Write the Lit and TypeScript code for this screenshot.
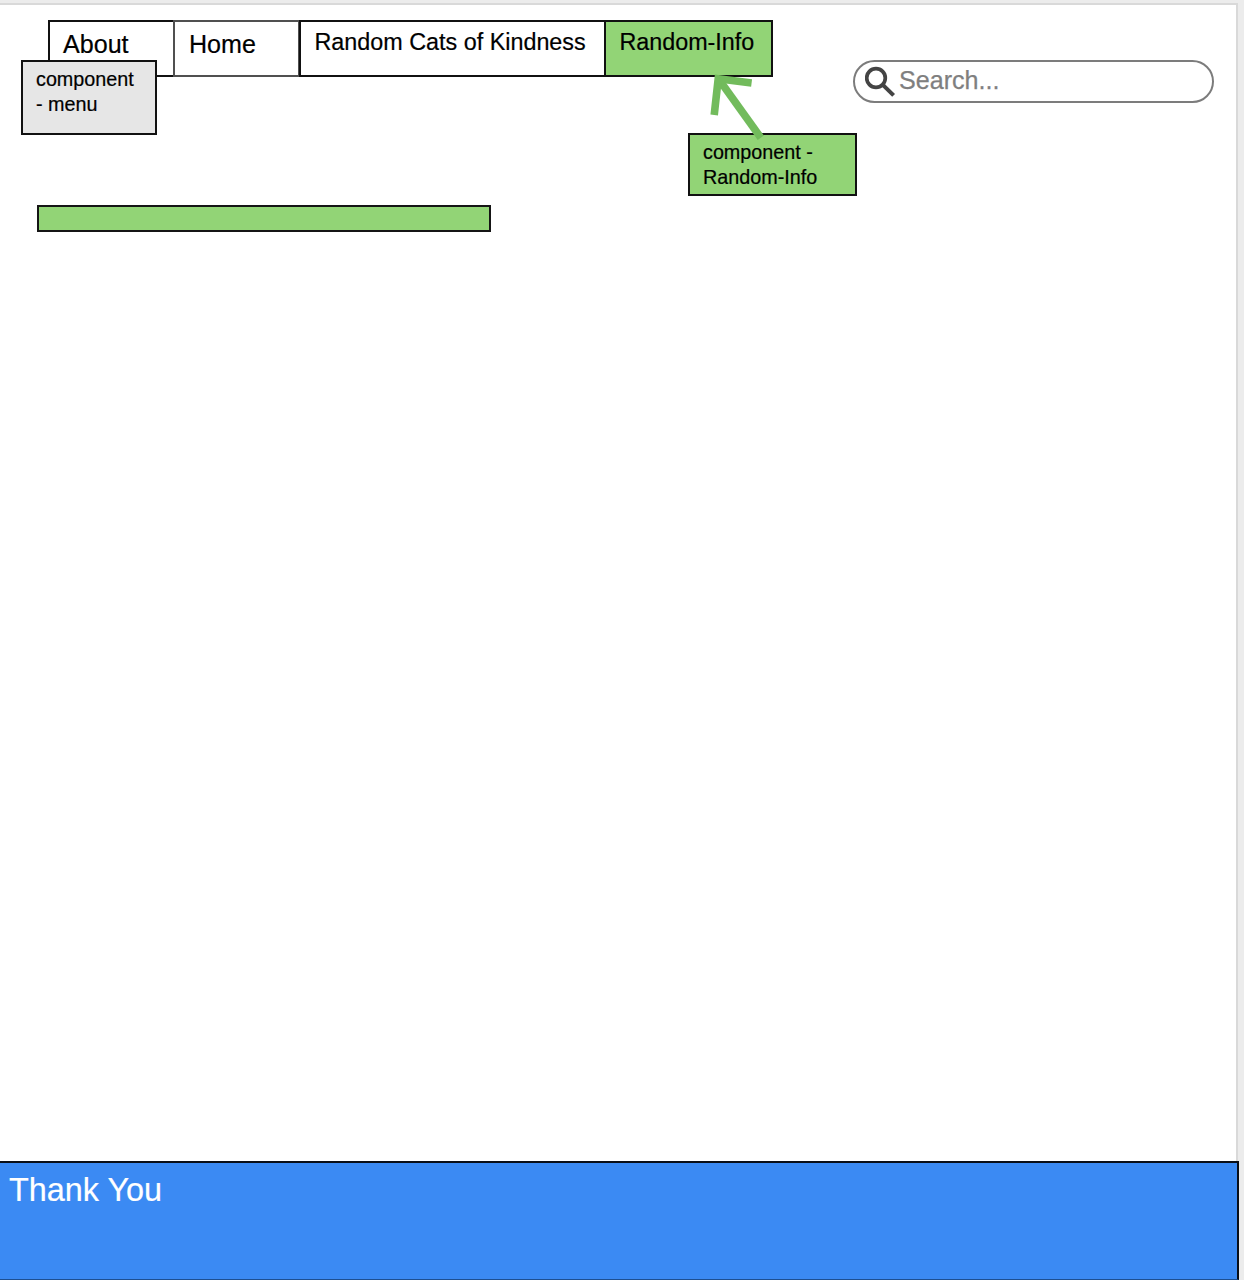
import { LitElement, html, css } from "lit";
import { customElement } from "lit/decorators.js";

@customElement("search-box")
class SearchBox extends LitElement {
  static styles = css`
    :host {
      display: flex;
      align-items: center;
      box-sizing: border-box;
      width: 361px;
      height: 43px;
      padding-left: 10px;
      border: 2px solid #7c7c7c;
      border-radius: 22px;
      background: #fff;
    }
    .icon {
      flex: none;
      width: 32px;
      height: 32px;
      margin-top: 1px;
    }
    .hint {
      margin: -4px 0 0 2px;
      color: #7f7f7f;
      font-size: 25.1px;
      line-height: 30px;
      -webkit-text-stroke: 0.25px #7f7f7f;
    }
  `;
  render() {
    return html`
      <svg class="icon" viewBox="0 0 32 32" fill="none" stroke="#444">
        <circle cx="11" cy="12" r="9.3" stroke-width="3.7" />
        <path d="M17.6 18.6 28.6 29.4" stroke-width="4" />
      </svg>
      <span class="hint">Search...</span>
    `;
  }
}

@customElement("app-root")
class AppRoot extends LitElement {
  static styles = css`
    :host {
      display: block;
      box-sizing: border-box;
      width: 1244px;
      height: 1280px;
      overflow: hidden;
      position: relative;
      background: #ececec;
      color: #000;
      font-family: "Liberation Sans", Arial, sans-serif;
      -webkit-text-stroke: 0.2px currentColor;
    }
    .page {
      display: flex;
      flex-direction: column;
      box-sizing: border-box;
      width: 1239px;
      height: 1280px;
      padding-top: 3px;
    }
    .sheet {
      flex: 1;
      box-sizing: border-box;
      width: 1238px;
      border-top: 2px solid #d9d9d9;
      border-right: 2px solid #d9d9d9;
      background: #fff;
    }
    .top {
      display: flex;
      align-items: flex-start;
      padding: 15px 0 0 48px;
    }
    .menu {
      display: flex;
      height: 57px;
    }
    .item {
      box-sizing: border-box;
      width: 127px;
      margin-right: -1px;
      padding: 7px 0 0 13px;
      border: 2px solid #111;
      font-size: 25.1px;
      line-height: 30px;
      white-space: nowrap;
    }
    .soft {
      border-color: #505050;
      margin-left: -1px;
      padding-left: 14px;
    }
    .cats {
      position: relative;
      width: 307px;
      margin-right: -2px;
      padding: 5px 0 0 13.5px;
      font-size: 23.35px;
      border-color: #111;
    }
    .info {
      position: relative;
      width: 169px;
      margin-right: 0;
      padding: 5px 0 0 13.5px;
      background: #92d476;
      font-size: 23.3px;
    }
    .search {
      margin: 40px 0 0 80px;
    }
    .bar {
      box-sizing: border-box;
      width: 454px;
      height: 27px;
      margin: 102px 0 0 37px;
      border: 2px solid #151515;
      background: #92d476;
    }
    .footer {
      box-sizing: border-box;
      height: 119px;
      padding: 11px 0 0 9px;
      border: 2px solid #0a0f18;
      border-left: 0;
      border-bottom: 1px solid #1d4f91;
      background: #3b8af3;
      color: #fff;
      font-size: 32.4px;
      line-height: 32px;
    }
    .note {
      position: absolute;
      box-sizing: border-box;
      border: 2px solid #111;
      padding: 5px 0 0 13px;
      font-size: 19.75px;
      line-height: 25px;
      white-space: nowrap;
    }
    .note-menu {
      left: 21px;
      top: 60px;
      width: 136px;
      height: 75px;
      background: #e6e6e6;
    }
    .note-info {
      left: 688px;
      top: 133px;
      width: 169px;
      height: 63px;
      background: #92d476;
    }
    .arrow {
      position: absolute;
      left: 700px;
      top: 65px;
    }
  `;
  render() {
    return html`
      <main class="page">
        <section class="sheet">
          <header class="top">
            <nav class="menu">
              <div class="item">About</div>
              <div class="item soft">Home</div>
              <div class="item cats">Random Cats of Kindness</div>
              <div class="item info">Random-Info</div>
            </nav>
            <search-box class="search"></search-box>
          </header>
          <div class="bar"></div>
        </section>
        <footer class="footer">Thank You</footer>
      </main>
      <div class="note note-menu">component<br />- menu</div>
      <div class="note note-info">component -<br />Random-Info</div>
      <svg class="arrow" width="80" height="80" fill="none" stroke="#72bb5c" stroke-width="7.6">
        <path d="M60.8 72.8 19 14.5" />
        <path d="M14.2 50 18.2 13.8 51.6 18" />
      </svg>
    `;
  }
}
